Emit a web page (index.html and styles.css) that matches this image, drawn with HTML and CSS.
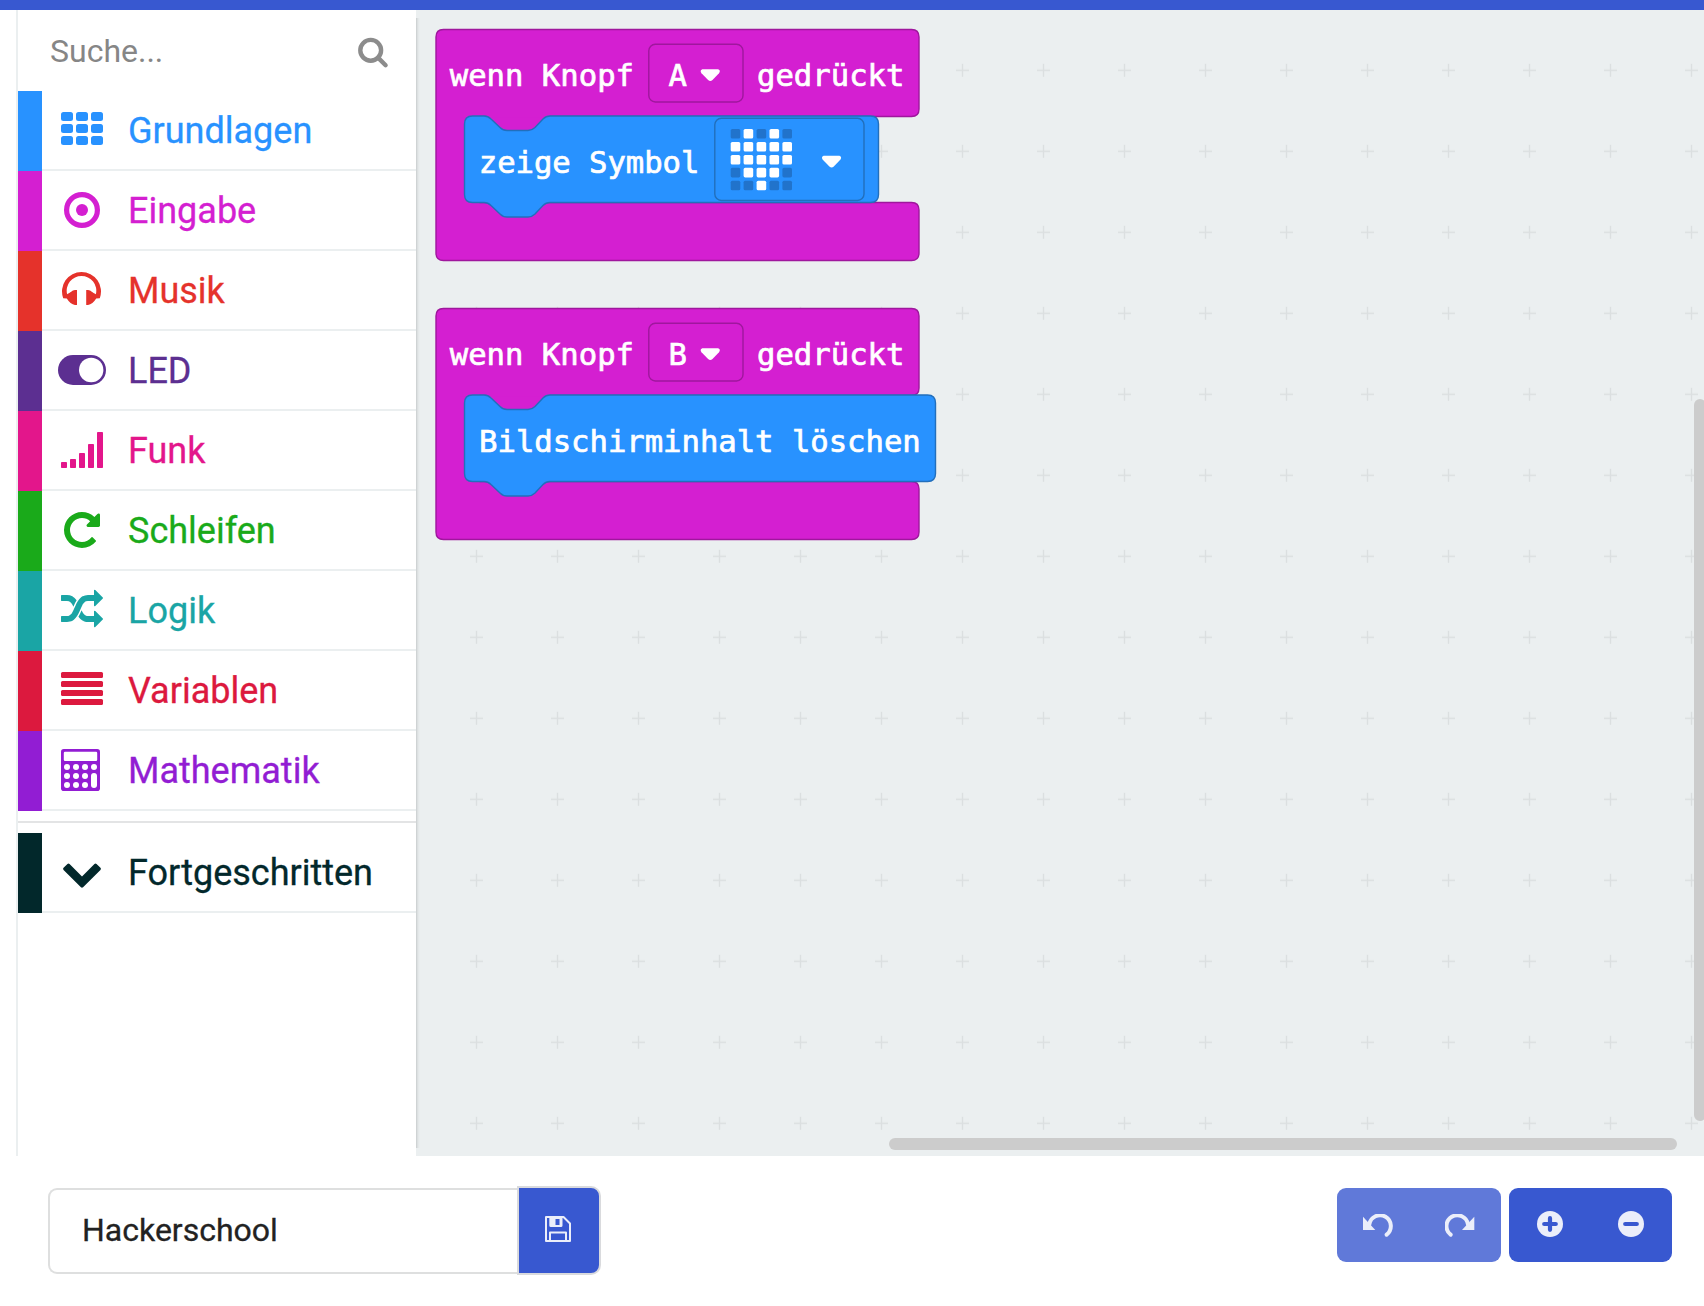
FILE: index.html
```html
<!DOCTYPE html>
<html lang="de">
<head>
<meta charset="utf-8">
<title>Hackerschool</title>
<link rel="stylesheet" href="styles.css">
</head>
<body>
<header class="topbar"></header>
<main class="editor">
  <aside class="toolbox">
    <div class="search">
      <span class="search-label">Suche...</span>
      <svg class="search-icon" width="32" height="32" viewBox="0 0 32 32"><circle cx="13.7" cy="13.3" r="10.4"/><path d="M21 20.6 28.6 28.2"/></svg>
    </div>
    <ul class="categories">
      <li class="category basic"><svg class="icon" viewBox="0 0 48 78"><rect x="3" y="21" width="12" height="9" rx="2.5"/><rect x="18" y="21" width="12" height="9" rx="2.5"/><rect x="33" y="21" width="12" height="9" rx="2.5"/><rect x="3" y="33" width="12" height="9" rx="2.5"/><rect x="18" y="33" width="12" height="9" rx="2.5"/><rect x="33" y="33" width="12" height="9" rx="2.5"/><rect x="3" y="45" width="12" height="9" rx="2.5"/><rect x="18" y="45" width="12" height="9" rx="2.5"/><rect x="33" y="45" width="12" height="9" rx="2.5"/></svg><span>Grundlagen</span></li>
      <li class="category input"><svg class="icon" viewBox="0 0 48 78"><circle cx="24" cy="39" r="15.4" fill="none" stroke="currentColor" stroke-width="5.2"/><circle cx="24" cy="39" r="6"/></svg><span>Eingabe</span></li>
      <li class="category music"><svg class="icon" viewBox="0 0 48 78"><path d="M5.2 47.2A19.5 19.5 0 1 1 41.8 47.2L38.2 47.4C36 51 33 53.4 30 54H28.2V39H30C33 39.2 34.4 41.8 37.900 43.2A14.8 14.8 0 1 0 9.100 43.2C12.600 41.8 14 39.2 17 39H19V54H17C14 53.4 11 51 8.8 47.4Z"/></svg><span>Musik</span></li>
      <li class="category led"><svg class="icon" viewBox="0 0 48 78"><rect x="0" y="24" width="48" height="30" rx="15"/><circle cx="33.2" cy="39" r="12.2" fill="#fff"/></svg><span>LED</span></li>
      <li class="category radio"><svg class="icon" viewBox="0 0 48 78"><rect x="3" y="51" width="6" height="6" rx=".8"/><rect x="12" y="48" width="6" height="9" rx=".8"/><rect x="21" y="42" width="6" height="15" rx=".8"/><rect x="30" y="33" width="6" height="24" rx=".8"/><rect x="39" y="21" width="6" height="36" rx=".8"/></svg><span>Funk</span></li>
      <li class="category loops"><svg class="icon" viewBox="0 0 48 78"><path transform="translate(3 18) scale(.0234375)" d="M1664 256v448q0 26-19 45t-45 19h-448q-42 0-59-40-17-39 14-69l138-138q-148-137-349-137-104 0-198.500 40.500t-163.500 109.500-109.500 163.500-40.500 198.500 40.500 198.500 109.500 163.500 163.500 109.500 198.500 40.500q119 0 225-52t179-147q7-10 23-12 15 0 25 9l137 138q9 8 9.500 20.500t-7.500 22.500q-109 132-264 204.500t-327 72.500q-156 0-298-61t-245-164-164-245-61-298 61-298 164-245 245-164 298-61q147 0 284.500 55.500t244.500 156.500l130-129q29-31 70-14 39 17 39 59z"/></svg><span>Schleifen</span></li>
      <li class="category logic"><svg class="icon" viewBox="0 0 48 78"><path transform="translate(3 18) scale(.0234375)" d="M666 481q-60 92-137 273-22-45-37-72.500t-40.500-63.500-51-56.500-63-35-81.500-14.500h-224q-14 0-23-9t-9-23v-192q0-14 9-23t23-9h224q250 0 410 225zm1126 799q0 14-9 23l-320 320q-9 9-23 9-13 0-22.500-9.500t-9.500-22.500v-192q-32 0-85 .5t-81 1-73-1-71-5-64-10.500-63-18.500-58-28.500-59-40-55-53.500-56-69.500q59-93 136-273 22 45 37 72.500t40.500 63.500 51 56.500 63 35 81.500 14.500h256v-192q0-14 9-23t23-9q12 0 24 10l319 319q9 9 9 23zm0-896q0 14-9 23l-320 320q-9 9-23 9-13 0-22.500-9.500t-9.500-22.500v-192h-256q-48 0-87 15t-69 45-51 61.500-45 77.500q-32 62-78 171-29 66-49.500 111t-54 105-64 100-74 83-90 68.500-106.500 42-128 16.500h-224q-14 0-23-9t-9-23v-192q0-14 9-23t23-9h224q48 0 87-15t69-45 51-61.500 45-77.500q32-62 78-171 29-66 49.500-111t54-105 64-100 74-83 90-68.500 106.500-42 128-16.500h256v-192q0-14 9-23t23-9q12 0 24 10l319 319q9 9 9 23z"/></svg><span>Logik</span></li>
      <li class="category variables"><svg class="icon" viewBox="0 0 48 78"><rect x="3" y="21" width="42" height="6" rx="1.5"/><rect x="3" y="30" width="42" height="6" rx="1.500"/><rect x="3" y="39" width="42" height="6" rx="1.500"/><rect x="3" y="48" width="42" height="6" rx="1.500"/></svg><span>Variablen</span></li>
      <li class="category math"><svg class="icon" viewBox="0 0 48 78"><rect x="3" y="18" width="39" height="42" rx="2.800"/><g fill="#fff"><rect x="5.800" y="20.800" width="33.400" height="9.200" rx="1.200"/><circle cx="9" cy="36" r="3"/><circle cx="18" cy="36" r="3"/><circle cx="27" cy="36" r="3"/><circle cx="36" cy="36" r="3"/><circle cx="9" cy="45" r="3"/><circle cx="18" cy="45" r="3"/><circle cx="27" cy="45" r="3"/><circle cx="9" cy="54" r="3"/><circle cx="18" cy="54" r="3"/><circle cx="27" cy="54" r="3"/><rect x="33" y="42" width="6" height="15" rx="3"/></g></svg><span>Mathematik</span></li>
    </ul>
    <ul class="categories advanced-group">
      <li class="category advanced"><svg class="icon" viewBox="0 0 48 78"><path transform="translate(3 18) scale(.0234375)" d="M1683 808l-742 741q-19 19-45 19t-45-19l-742-741q-19-19-19-45.500t19-45.500l166-165q19-19 45-19t45 19l531 531 531-531q19-19 45-19t45 19l166 165q19 19 19 45.500t-19 45.500z"/></svg><span>Fortgeschritten</span></li>
    </ul>
  </aside>
  <section class="workspace">
    <svg class="canvas" width="1288" height="1146" viewBox="416 10 1288 1146">
      <defs>
        <pattern id="grid" x="436" y="29.800" width="81" height="81" patternUnits="userSpaceOnUse">
          <path class="cross" d="M34 40.500H47M40.500 34V47"/>
        </pattern>
        <path id="arrow" d="M2.600 .3H16.900C19.300 .3 20 2.600 18.500 4.200L12 10.900Q9.800 13 7.600 10.900L1 4.200C-.5 2.600 .2 .3 2.600 .3Z"/>
        <path id="event" d="M443.500 29.500H911.500Q919 29.500 919 37V109Q919 116.500 911.500 116.500H550L534 133H502L486 116.500H480L467 130V190L480 202.500H911.500Q919 202.500 919 210V253Q919 260.500 911.500 260.500H443.500Q436 260.500 436 253V37Q436 29.500 443.500 29.500Z"/>
        <rect id="led" width="9.600" height="9.600" rx="1.600"/>
      </defs>
      <rect x="416" y="10" width="1288" height="1146" fill="url(#grid)"/>
      <g>
        <use href="#event" class="event"/>
        <path class="event-fill" d="M460 117.200H550V135H460Z"/>
        <path class="action" d="M472.500 116H484Q488 116 491 119L500 127.500Q503 130.500 507 130.500H528Q532 130.500 535 127.500L543 119Q546 116 550 116H870.500Q878.500 116 878.500 124V194.500Q878.500 202.500 870.500 202.500H550Q546 202.500 543 205.500L535 214Q532 217 528 217H507Q503 217 500 214L491 205.500Q488 202.500 484 202.500H472.500Q464.500 202.500 464.500 194.500V124Q464.500 116 472.500 116Z"/>
        <rect class="event field" x="648.800" y="44.300" width="94.200" height="57.700" rx="6.500"/>
        <rect class="action field" x="714.800" y="118.300" width="149.200" height="82.200" rx="6.500"/>
        <text x="449.700" y="85.500" textLength="184.300">wenn Knopf</text>
        <text x="668.500" y="85.500">A</text>
        <use href="#arrow" class="mark" x="700.500" y="69"/>
        <text x="757" y="85.500" textLength="147.400">gedrückt</text>
        <text x="478.800" y="172.500" textLength="220.600">zeige Symbol</text>
        <use href="#arrow" class="mark" x="821.800" y="155.500"/>
        <g class="led-off">
          <use href="#led" x="730.7" y="129"/><use href="#led" x="756.6" y="129"/><use href="#led" x="782.4" y="129"/>
          <use href="#led" x="730.7" y="167.800"/><use href="#led" x="782.4" y="167.800"/>
          <use href="#led" x="730.7" y="180.700"/><use href="#led" x="743.6" y="180.700"/><use href="#led" x="769.5" y="180.700"/><use href="#led" x="782.4" y="180.700"/>
        </g>
        <g class="led-on">
          <use href="#led" x="743.6" y="129"/><use href="#led" x="769.5" y="129"/>
          <use href="#led" x="730.7" y="141.900"/><use href="#led" x="743.6" y="141.900"/><use href="#led" x="756.6" y="141.900"/><use href="#led" x="769.5" y="141.900"/><use href="#led" x="782.4" y="141.900"/>
          <use href="#led" x="730.7" y="154.900"/><use href="#led" x="743.6" y="154.900"/><use href="#led" x="756.6" y="154.900"/><use href="#led" x="769.5" y="154.900"/><use href="#led" x="782.4" y="154.900"/>
          <use href="#led" x="743.6" y="167.800"/><use href="#led" x="756.6" y="167.800"/><use href="#led" x="769.5" y="167.800"/>
          <use href="#led" x="756.6" y="180.700"/>
        </g>
      </g>
      <g transform="translate(0 279)">
        <use href="#event" class="event"/>
        <path class="event-fill" d="M460 117.200H550V135H460Z"/>
        <path class="action" d="M472.500 116H484Q488 116 491 119L500 127.500Q503 130.500 507 130.500H528Q532 130.500 535 127.500L543 119Q546 116 550 116H927.500Q935.500 116 935.500 124V194.500Q935.500 202.500 927.500 202.500H550Q546 202.500 543 205.500L535 214Q532 217 528 217H507Q503 217 500 214L491 205.500Q488 202.500 484 202.500H472.500Q464.500 202.500 464.500 194.500V124Q464.500 116 472.500 116Z"/>
        <rect class="event field" x="648.800" y="44.300" width="94.200" height="57.700" rx="6.500"/>
        <text x="449.700" y="85.500" textLength="184.300">wenn Knopf</text>
        <text x="668.500" y="85.500">B</text>
        <use href="#arrow" class="mark" x="700.500" y="69"/>
        <text x="757" y="85.500" textLength="147.400">gedrückt</text>
        <text x="479.100" y="172.500" textLength="441.600">Bildschirminhalt löschen</text>
      </g>
      <rect class="scroll" x="1694" y="399" width="12" height="722" rx="6"/>
      <rect class="scroll" x="889" y="1138" width="788" height="12" rx="6"/>
    </svg>
  </section>
</main>
<footer class="footer">
  <div class="project">
    <div class="project-name">Hackerschool</div>
    <div class="save"><svg width="26" height="26" viewBox="0 0 26 26"><path class="line" d="M1 1H18.500L25 7.500V25H1ZM5 25V16.500H21V25"/><path class="solid" fill-rule="evenodd" d="M4.300 1H17.500V9.500Q17.500 11 16 11H5.800Q4.300 11 4.300 9.500ZM10.500 3V9H14.500V3Z"/></svg></div>
  </div>
  <div class="actions">
    <div class="group history">
      <svg width="29.300" height="22.700" viewBox="159 280 88 68"><path class="arc" d="M178 311A32.500 32.500 0 1 1 230 342"/><path class="solid" d="M159 288 196 328H159Z"/></svg>
      <svg width="29.300" height="22.700" viewBox="159 280 88 68"><g transform="translate(406 0) scale(-1 1)"><path class="arc" d="M178 311A32.500 32.500 0 1 1 230 342"/><path class="solid" d="M159 288 196 328H159Z"/></g></svg>
    </div>
    <div class="group zoom">
      <svg width="26" height="26" viewBox="0 0 26 26"><circle class="solid" cx="13" cy="13" r="13"/><path class="sign" d="M7.200 13H18.800M13 7.200V18.800"/></svg>
      <svg width="26" height="26" viewBox="0 0 26 26"><circle class="solid" cx="13" cy="13" r="13"/><path class="sign" d="M7.200 13H18.800"/></svg>
    </div>
  </div>
</footer>
</body>
</html>
```

FILE: styles.css
```css
* { box-sizing: border-box; }
body {
  margin: 0;
  width: 1704px;
  height: 1306px;
  overflow: hidden;
  display: flex;
  flex-direction: column;
  background: #fff;
  font-family: Roboto, "Liberation Sans", sans-serif;
}
svg { display: block; }
.topbar { height: 10px; background: #3858d0; }
.editor { height: 1146px; display: flex; padding-left: 16px; }
.toolbox {
  width: 400px;
  border-left: 2px solid #ebeff0;
  background: #fff;
}
.search {
  height: 81px;
  padding: 0 27px 0 32px;
  display: flex;
  align-items: center;
  justify-content: space-between;
}
.search-label { font-size: 32px; color: #868686; }
.search-icon { fill: none; stroke: #8c8c8c; stroke-width: 4.400; stroke-linecap: round; margin-top: 4px; }
.categories { list-style: none; margin: 0; padding: 0; }
.category {
  height: 80px;
  display: flex;
  align-items: center;
  border-left: 24px solid currentColor;
  padding: 0 0 2px 16px;
  gap: 22px;
  font-size: 36px;
  -webkit-text-stroke: .3px currentColor;
  background: linear-gradient(#ebeff0, #ebeff0) bottom / 100% 2px no-repeat padding-box;
}
.category span { padding-top: 2px; }
.icon { width: 48px; height: 78px; fill: currentColor; }
.basic { color: #2892ff; }
.input { color: #d41fd1; }
.music { color: #e5322b; }
.led { color: #5c2f91; }
.radio { color: #e3168b; }
.loops { color: #1aaa1a; }
.logic { color: #1aa5a5; }
.variables { color: #dc193e; }
.math { color: #921dd3; }
.advanced { color: #02282b; }
.advanced-group { margin-top: 10px; padding-top: 10px; border-top: 2px solid #e3e4e5; }

.workspace {
  width: 1288px;
  background: linear-gradient(90deg, #c9cdce, #e2e6e7 2px, #ebeff0 4px) 0 8px / 100% 1130px no-repeat, #ebeff0;
}
.cross { stroke: #dbdfe0; stroke-width: 1.400; }
.event { fill: #d41fd1; stroke: #9f179d; stroke-width: 1.400; }
.event-fill { fill: #d41fd1; }
.action { fill: #2892ff; stroke: #226fbc; stroke-width: 1.400; }
.canvas text {
  font-family: "DejaVu Sans Mono", monospace;
  font-size: 30.600px;
  fill: #fff;
  stroke: #fff;
  stroke-width: .7;
}
.mark, .led-on { fill: #fff; }
.led-off { fill: #2173cb; }
.scroll { fill: #ccc; }

.footer {
  height: 150px;
  padding: 30px 32px 0 48px;
  display: flex;
  justify-content: space-between;
  align-items: flex-start;
}
.project { display: flex; align-items: center; }
.project-name {
  width: 469px;
  height: 86px;
  padding-left: 32px;
  border: 2px solid #dedfdf;
  border-right: 0;
  border-radius: 9px 0 0 9px;
  line-height: 81px;
  font-size: 32px;
  -webkit-text-stroke: .3px currentColor;
  color: #222;
}
.save {
  width: 84px;
  height: 89px;
  display: flex;
  align-items: center;
  justify-content: center;
  padding-bottom: 3px;
  padding-right: 3px;
  border: 2px solid #d9dadd;
  border-radius: 0 10px 10px 0;
  background: #3858d0;
}
.line { fill: none; stroke: #ebeefa; stroke-width: 2; stroke-linejoin: round; }
.solid { fill: #ebeefa; }
.actions { display: flex; gap: 8px; padding-top: 2px; }
.group {
  width: 163px;
  height: 74px;
  border-radius: 9px;
  background: #3858d0;
  display: flex;
  align-items: center;
  justify-content: space-around;
}
.zoom { padding-bottom: 2px; }
.history { width: 164px; background: #6079d9; padding-top: 1px; }
.arc { fill: none; stroke: #ebeefa; stroke-width: 12; stroke-linecap: round; }
.sign { stroke: #3858d0; stroke-width: 4.200; stroke-linecap: round; }
```
